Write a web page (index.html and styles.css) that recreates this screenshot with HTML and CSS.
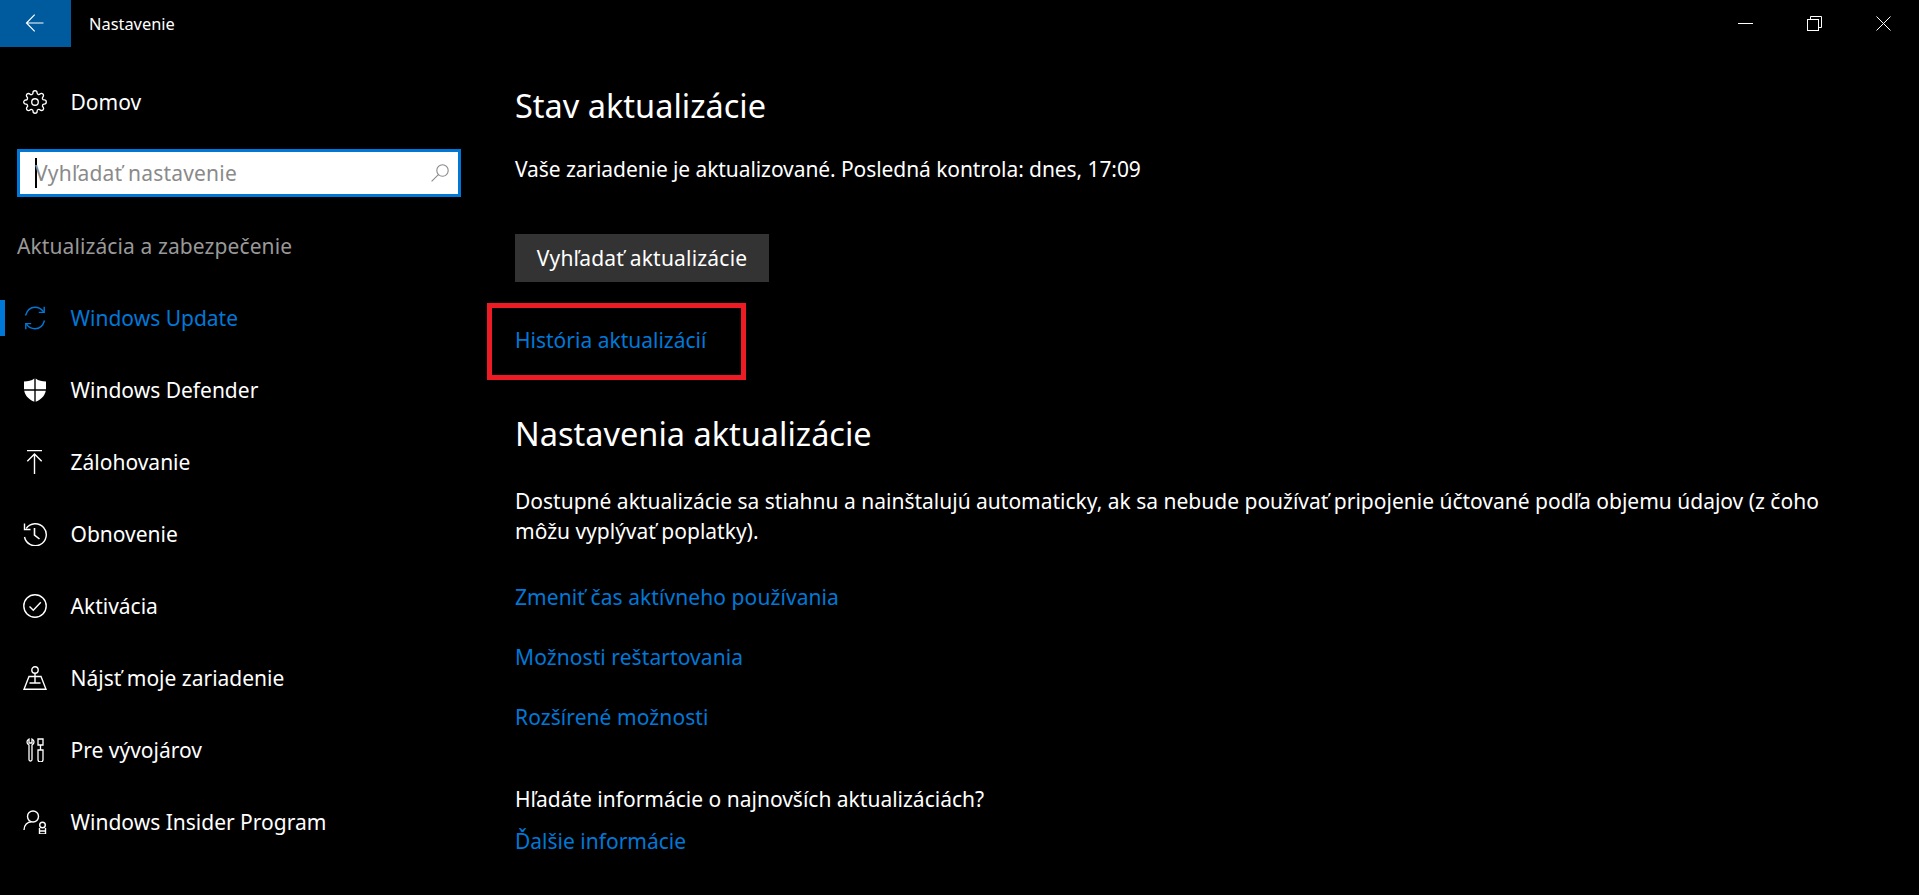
FILE: index.html
```html
<!DOCTYPE html>
<html lang="sk">
<head>
    <meta charset="UTF-8">
    <meta name="viewport" content="width=device-width, initial-scale=1.0">
    <title>Nastavenie</title>
    <link rel="stylesheet" href="styles.css">
</head>
<body>
    <!-- title bar -->
    <div class="titlebar">
        <div class="back-btn">
            <svg width="20" height="20" viewBox="0 0 20 20" fill="none" stroke="#fff" stroke-width="1.2"><path d="M18.5 10H1.500M9.700 1.700L1.500 10l8.200 8.300"/></svg>
        </div>
        <div class="app-title">Nastavenie</div>
        <div class="window-controls">
            <div class="control-btn"><svg width="15" height="15" viewBox="0 0 15 15" fill="none" stroke="#fff"><path d="M0 7.500h15"/></svg></div>
            <div class="control-btn"><svg width="15" height="15" viewBox="0 0 15 15" fill="none" stroke="#fff"><rect x="0.500" y="3.500" width="11" height="11"/><path d="M3.500 3.500V0.500h11v11h-3"/></svg></div>
            <div class="control-btn"><svg width="15" height="15" viewBox="0 0 15 15" fill="none" stroke="#fff"><path d="M0.500 0.500l14 14M14.500 0.500l-14 14"/></svg></div>
        </div>
    </div>

    <div class="app">
        <!-- left side -->
        <div class="sidebar">
            <div class="nav-item home">
                <svg class="nav-icon" viewBox="0.300 0.300 23.400 23.400" fill="none" stroke="#fff" stroke-width="1.300"><circle cx="12" cy="12" r="3.200"/><path d="M19.400 15a1.650 1.650 0 0 0 .33 1.820l.06.06a2 2 0 0 1 0 2.830 2 2 0 0 1-2.830 0l-.06-.06a1.650 1.650 0 0 0-1.820-.33 1.650 1.650 0 0 0-1 1.510V21a2 2 0 0 1-2 2 2 2 0 0 1-2-2v-.09A1.650 1.650 0 0 0 9 19.400a1.650 1.650 0 0 0-1.820.33l-.06.06a2 2 0 0 1-2.830 0 2 2 0 0 1 0-2.830l.06-.06a1.650 1.650 0 0 0 .33-1.820 1.650 1.650 0 0 0-1.510-1H3a2 2 0 0 1-2-2 2 2 0 0 1 2-2h.09A1.650 1.650 0 0 0 4.600 9a1.650 1.650 0 0 0-.33-1.820l-.06-.06a2 2 0 0 1 0-2.830 2 2 0 0 1 2.830 0l.06.06a1.650 1.650 0 0 0 1.820.33H9a1.650 1.650 0 0 0 1-1.510V3a2 2 0 0 1 2-2 2 2 0 0 1 2 2v.09a1.650 1.650 0 0 0 1 1.510 1.650 1.650 0 0 0 1.820-.33l.06-.06a2 2 0 0 1 2.830 0 2 2 0 0 1 0 2.830l-.06.06a1.650 1.650 0 0 0-.33 1.820V9a1.650 1.650 0 0 0 1.510 1H21a2 2 0 0 1 2 2 2 2 0 0 1-2 2h-.09a1.650 1.650 0 0 0-1.510 1z"/></svg>
                <span>Domov</span>
            </div>

            <div class="search-box">
                <span class="caret"></span>
                <span class="search-text">Vyhľadať nastavenie</span>
                <svg class="search-icon" viewBox="0 0 18 18" fill="none" stroke="#8a8a8a" stroke-width="1.1"><circle cx="11.500" cy="6.500" r="5.700"/><path d="M7.400 10.600L0.600 17.400"/></svg>
            </div>

            <div class="group-title">Aktualizácia a zabezpečenie</div>

            <div class="nav-list">
                <div class="nav-item active">
                    <svg class="nav-icon" viewBox="0 0 24 24" fill="none" stroke="#0078d7" stroke-width="1.4"><path d="M2.500 9.500C3.900 4.600 7.600 1.200 12 1.200c3.600 0 6.500 1.700 8.600 4.600"/><path d="M21.200 0.800v5.600h-5.400"/><path d="M21.500 14.500c-1.400 4.900-5.100 8.300-9.500 8.300-3.600 0-6.500-1.700-8.600-4.600"/><path d="M2.800 23.200v-5.600h5.400"/></svg>
                    <span>Windows Update</span>
                </div>
                <div class="nav-item">
                    <svg class="nav-icon" viewBox="0 0 24 24" fill="#fff"><path d="M11.300 0.400C8.600 2.600 4.900 3.300 1 3.400v7.900h10.300z"/><path d="M12.700 0.400c2.700 2.200 6.400 2.900 10.300 3v7.900H12.700z"/><path d="M1.200 12.700h10.100v11C6.300 21.600 2.400 18.300 1.200 12.700z"/><path d="M12.700 12.700h10.100c-1.200 5.600-5.100 8.900-10.100 11z"/></svg>
                    <span>Windows Defender</span>
                </div>
                <div class="nav-item">
                    <svg class="nav-icon" viewBox="0 0 24 24" fill="none" stroke="#fff" stroke-width="1.4"><path d="M4 0.500h15M11.500 24V4M4.300 11.200L11.500 4l7.200 7.200"/></svg>
                    <span>Zálohovanie</span>
                </div>
                <div class="nav-item">
                    <svg class="nav-icon" viewBox="0 0 24 24" fill="none" stroke="#fff" stroke-width="1.4"><path d="M3.200 6.500A11 11 0 1 1 1.500 15"/><path d="M1.500 1.500v6h6"/><path d="M11.500 6v7l5 4" stroke-width="1.600"/></svg>
                    <span>Obnovenie</span>
                </div>
                <div class="nav-item">
                    <svg class="nav-icon" viewBox="0 0 24 24" fill="none" stroke="#fff" stroke-width="1.4"><circle cx="12" cy="12" r="11.200"/><path d="M6.500 12.500l3.800 3.800 7.500-8"/></svg>
                    <span>Aktivácia</span>
                </div>
                <div class="nav-item">
                    <svg class="nav-icon" viewBox="0 0 24 24" fill="none" stroke="#fff" stroke-width="1.4"><circle cx="12" cy="4" r="3.200"/><path d="M12 7.200V17M6 10.500h12l5 12.800H1zM6.500 17h11"/></svg>
                    <span>Nájsť moje zariadenie</span>
                </div>
                <div class="nav-item">
                    <svg class="nav-icon" viewBox="-1.500 0 24 24" fill="none" stroke="#fff" stroke-width="1.300"><path d="M4.500 1v4h3V1A3.200 3.200 0 0 1 9.500 4c0 1.500-1 2.500-2 3v14.500a1.500 1.500 0 0 1-3 0V7c-1-.5-2-1.500-2-3a3.200 3.200 0 0 1 2-3z"/><path d="M13.500 1h5v6h-5zM16 7v5M13.500 12h5v9.500a2.500 2.500 0 0 1-5 0z"/></svg>
                    <span>Pre vývojárov</span>
                </div>
                <div class="nav-item">
                    <svg class="nav-icon" viewBox="0 0 24 24" fill="none" stroke="#fff" stroke-width="1.4"><circle cx="10" cy="6.500" r="5.500"/><path d="M1 20c0-5 3.500-8 7.500-8.200"/><circle cx="19.500" cy="15" r="2.800"/><path d="M16.500 18v6h6v-6M16.500 21h6"/></svg>
                    <span>Windows Insider Program</span>
                </div>
            </div>
        </div>

        <!-- right side -->
        <div class="content">
            <h1 class="section-title">Stav aktualizácie</h1>
            <p class="status-text">Vaše zariadenie je aktualizované. Posledná kontrola: dnes, 17:09</p>
            <div class="check-btn">Vyhľadať aktualizácie</div>

            <div class="history-row">
                <a class="link">História aktualizácií</a>
                <div class="highlight-box"></div>
            </div>

            <h1 class="section-title second">Nastavenia aktualizácie</h1>
            <p class="desc-text">Dostupné aktualizácie sa stiahnu a nainštalujú automaticky, ak sa nebude používať pripojenie účtované podľa objemu údajov (z čoho môžu vyplývať poplatky).</p>

            <div class="link-list">
                <a class="link">Zmeniť čas aktívneho používania</a>
                <a class="link">Možnosti reštartovania</a>
                <a class="link">Rozšírené možnosti</a>
            </div>

            <p class="more-text">Hľadáte informácie o najnovších aktualizáciách?</p>
            <a class="link more-link">Ďalšie informácie</a>
        </div>
    </div>
</body>
</html>
```

FILE: styles.css
```css
* {
    margin: 0;
    padding: 0;
    box-sizing: border-box;
}

body {
    font-family: 'Noto Sans', 'Open Sans', sans-serif;
    background-color: #000;
    color: #fff;
    height: 895px;
    overflow: hidden;
    font-size: 21px;
    line-height: 30px;
}

/* title bar */
.titlebar {
    height: 47px;
    display: flex;
    align-items: center;
}

.back-btn {
    width: 71px;
    height: 47px;
    background-color: #005a9e;
    display: flex;
    align-items: center;
    justify-content: center;
    padding-right: 1px;
    padding-bottom: 2px;
}

.app-title {
    font-size: 16.4px;
    margin-left: 18px;
}

.window-controls {
    display: flex;
    margin-left: auto;
    padding-right: 1px;
}

.control-btn {
    width: 69px;
    height: 47px;
    display: flex;
    align-items: center;
    justify-content: center;
}

/* sidebar */
.app {
    display: flex;
}

.sidebar {
    width: 515px;
    flex-shrink: 0;
    padding-top: 19px;
}

.nav-item {
    height: 72px;
    display: flex;
    align-items: center;
    gap: 23.5px;
    padding-left: 23px;
    position: relative;
}

.nav-icon {
    width: 24px;
    height: 24px;
    flex-shrink: 0;
}

.nav-item.active {
    color: #0078d7;
}

.nav-item.active::before {
    content: '';
    position: absolute;
    left: 0;
    top: 18px;
    width: 5px;
    height: 36px;
    background-color: #0078d7;
}

.search-box {
    width: 444px;
    height: 48px;
    margin-left: 17px;
    margin-top: 11px;
    background-color: #fff;
    border: 3px solid #0078d7;
    display: flex;
    align-items: center;
    padding: 0 9px 0 15px;
    color: #8a8a8a;
}

.caret {
    width: 2px;
    height: 30px;
    background-color: #000;
    margin-right: -2px;
}

.search-text {
    flex: 1;
    letter-spacing: 0.2px;
}

.search-icon {
    width: 18px;
    height: 18px;
}

.group-title {
    color: #999;
    margin-top: 34px;
    margin-left: 17px;
    letter-spacing: 0.1px;
}

.nav-list {
    margin-top: 21px;
}

/* content */
.content {
    flex: 1;
    padding-top: 36px;
    padding-right: 60px;
}

.section-title {
    font-size: 32.5px;
    font-weight: 400;
    line-height: 46px;
}

.section-title.second {
    margin-top: 56px;
}

.status-text {
    margin-top: 25px;
    letter-spacing: -0.08px;
}

.check-btn {
    width: 254px;
    height: 48px;
    margin-top: 50px;
    background-color: #333;
    display: flex;
    align-items: center;
    justify-content: center;
    letter-spacing: 0.2px;
}

.link {
    color: #0078d7;
    display: block;
}

.history-row {
    position: relative;
    margin-top: 43px;
}

/* red annotation round the link */
.highlight-box {
    position: absolute;
    left: -28px;
    top: -22px;
    width: 259px;
    height: 77px;
    border: 5px solid #ed1c24;
}

.desc-text {
    margin-top: 29px;
}

.link-list {
    margin-top: 36px;
    display: flex;
    flex-direction: column;
    gap: 30px;
    letter-spacing: 0.08px;
}

.more-text {
    margin-top: 52px;
}

.more-link {
    margin-top: 12px;
}
```
